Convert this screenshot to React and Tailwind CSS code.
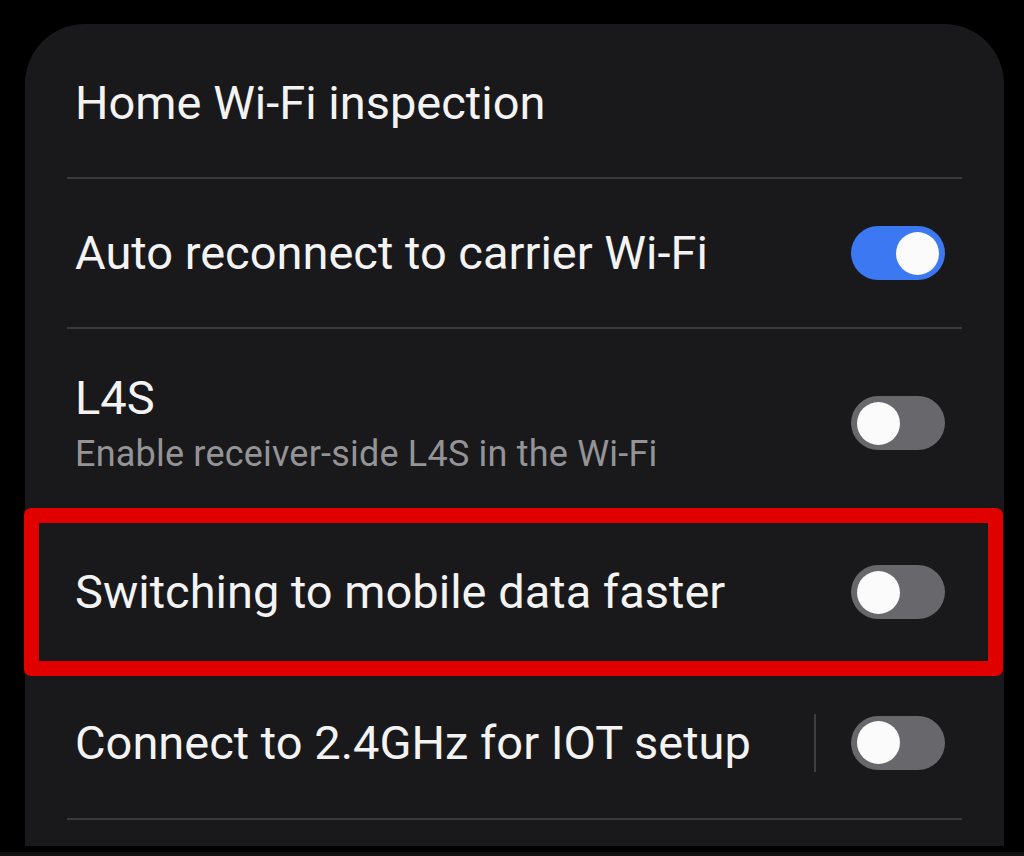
import React from "react";

// 開關元件：on 為藍色，off 為灰色
function Toggle({ on }) {
    return (
        <div
            className={
                on
                    ? "w-[94px] h-[54px] rounded-full bg-[#3b78f2] flex items-center justify-end px-[6px]"
                    : "w-[94px] h-[54px] rounded-full bg-[#67676c] flex items-center justify-start px-[6px]"
            }
        >
            <div className="w-[43px] h-[43px] rounded-full bg-[#fbfbfb]" />
        </div>
    );
}

function Divider() {
    return <div className="mx-[42px] h-[2px] bg-[#3a3a3c]" />;
}

function Row({ title, sub, on, height, bar }) {
    return (
        <div className={`flex items-center pl-[50px] pr-[59px] ${height}`}>
            <div className="flex-1 flex flex-col">
                <span className="text-[#f3f3f3] text-[47px] leading-[56px]">{title}</span>
                {sub && <span className="text-[#949497] text-[36px] leading-[44px] mt-[6px] tracking-[0.2px]">{sub}</span>}
            </div>
            {bar && <div className="w-[2px] h-[58px] bg-[#3e3e40] mr-[35px]" />}
            <Toggle on={on} />
        </div>
    );
}

export default function App() {
    return (
        <div className="w-[1024px] h-[856px] bg-black overflow-hidden flex flex-col" style={{ fontFamily: "Roboto, 'Liberation Sans', sans-serif" }}>
            <div className="ml-[25px] mr-[20px] mt-[24px] h-[822px] bg-[#19191b] rounded-t-[60px] flex flex-col relative">
                <div className="h-[153px] flex items-center pl-[50px] pt-[4px]">
                    <span className="text-[#f3f3f3] text-[47px] leading-[56px]">Home Wi-Fi inspection</span>
                </div>
                <Divider />
                <Row title="Auto reconnect to carrier Wi-Fi" on height="h-[148px]" />
                <Divider />
                <Row title="L4S" sub="Enable receiver-side L4S in the Wi-Fi" height="h-[188px]" />
                <Row title="Switching to mobile data faster" height="h-[150px]" />
                <Row title="Connect to 2.4GHz for IOT setup" bar height="h-[151px]" />
                <Divider />
                {/* 標註用的紅框 */}
                <div className="absolute left-[-1px] right-[1px] top-[484px] h-[168px] border-[15px] border-[#e10000] rounded-[7px] pointer-events-none" />
            </div>
            <div className="mt-[6px] h-[4px] bg-[#131314]" />
        </div>
    );
}
